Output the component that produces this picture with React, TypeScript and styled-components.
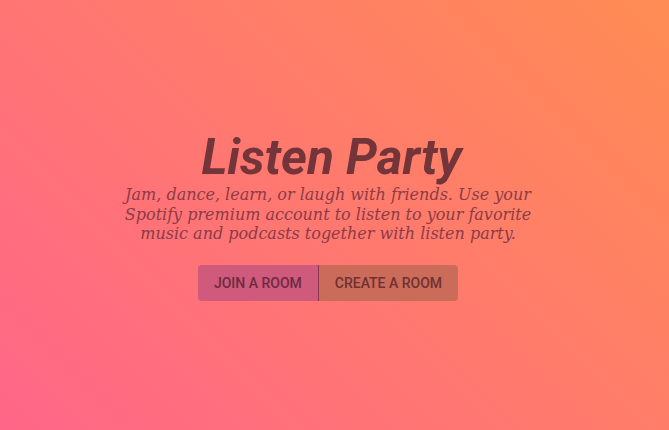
import React from "react";
import styled, { createGlobalStyle } from "styled-components";

const Global = createGlobalStyle`
  html, body { margin: 0; padding: 0; }
  body {
    min-height: 100vh;
    background: linear-gradient(45deg, #ff6689 0%, #ff8c54 100%);
  }
`;

const Page = styled.main`
  min-height: 100vh;
  box-sizing: border-box;
  padding-right: 13px;
  display: flex;
  align-items: center;
  justify-content: center;
`;

const Hero = styled.section`
  display: flex;
  flex-direction: column;
  align-items: center;
  text-align: center;
`;

const Title = styled.h1`
  margin: 0;
  padding-left: 7px;
  font-family: Roboto, "Liberation Sans", sans-serif;
  font-style: italic;
  font-weight: 700;
  font-size: 49.5px;
  line-height: 56px;
  color: #733539;
`;

const Tagline = styled.p`
  margin: 0;
  width: 420px;
  font-family: "DejaVu Serif", serif;
  font-style: italic;
  font-size: 16px;
  line-height: 19.5px;
  color: #8c3b47;
`;

const Group = styled.div`
  display: flex;
  margin-top: 21px;
  border-radius: 4px;
  overflow: hidden;
`;

const RoomButton = styled.button<{ $tone: "join" | "create" }>`
  height: 36px;
  padding: 0 16px;
  border: none;
  background: ${(p) => (p.$tone === "join" ? "#cf5a7c" : "#cb6c5b")};
  color: ${(p) => (p.$tone === "join" ? "#6e2a42" : "#6f3131")};
  font-family: Roboto, "Liberation Sans", sans-serif;
  font-weight: 500;
  font-size: 14px;
  text-transform: uppercase;
  letter-spacing: 0;
  cursor: pointer;
  & + & {
    border-left: 1px solid #8a3352;
  }
`;

export default function App() {
  return (
    <>
      <Global />
      <Page>
        <Hero>
          <Title>Listen Party</Title>
          <Tagline>
            Jam, dance, learn, or laugh with friends. Use your Spotify premium
            account to listen to your favorite music and podcasts together with
            listen party.
          </Tagline>
          <Group>
            <RoomButton $tone="join">Join a Room</RoomButton>
            <RoomButton $tone="create">Create a Room</RoomButton>
          </Group>
        </Hero>
      </Page>
    </>
  );
}
